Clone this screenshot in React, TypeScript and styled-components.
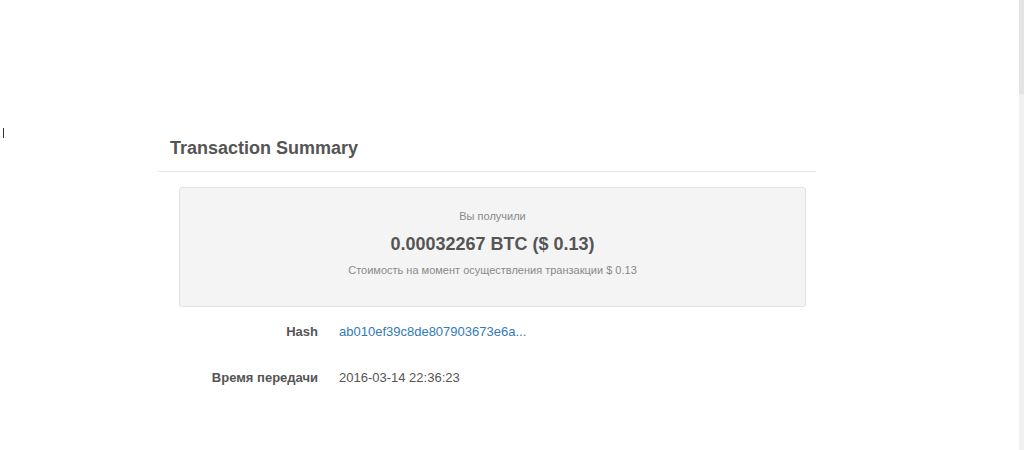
import React from 'react';
import styled, { createGlobalStyle } from 'styled-components';

const GlobalStyle = createGlobalStyle`
    html, body {
        margin: 0;
        padding: 0;
        background: #fff;
        font-family: "Liberation Sans", Arial, sans-serif;
    }
`;

const Page = styled.div`
    position: relative;
    width: 1024px;
    height: 450px;
    overflow: hidden;
    background: #fff;
`;

const Caret = styled.div`
    position: absolute;
    left: 3px;
    top: 128px;
    width: 1px;
    height: 10px;
    background: #333;
`;

const ScrollTrack = styled.div`
    position: absolute;
    right: 0;
    top: 0;
    width: 5px;
    height: 100%;
    background: #f1f1f1;
`;

const ScrollThumb = styled.div`
    height: 94px;
    background: #e4e4e4;
`;

const Panel = styled.section`
    width: 658px;
    margin-left: 158px;
    padding-top: 137px;
`;

const Header = styled.div`
    padding: 0 12px 12px;
    border-bottom: 1px solid #e8e8e8;
`;

const Title = styled.h3`
    margin: 0;
    font-size: 18px;
    line-height: 22px;
    font-weight: 700;
    color: #555;
`;

const Summary = styled.div`
    margin: 15px 10px 0 21px;
    height: 120px;
    box-sizing: border-box;
    background: #f4f4f4;
    border: 1px solid #e2e2e2;
    border-radius: 3px;
    display: flex;
    flex-direction: column;
    align-items: center;
    padding-top: 21px;
`;

const Caption = styled.div`
    font-size: 11px;
    line-height: 14px;
    color: #8a8a8a;
`;

const Amount = styled.div`
    margin: 10px 0 8px;
    font-size: 18px;
    line-height: 22px;
    font-weight: 700;
    color: #555;
`;

const Rows = styled.div`
    margin: 17px 0 0 21px;
    display: grid;
    grid-template-columns: 139px 1fr;
    column-gap: 21px;
    row-gap: 30px;
    font-size: 13px;
    line-height: 16px;
`;

const Label = styled.div`
    text-align: right;
    font-weight: 700;
    color: #555;
`;

const Value = styled.div<{ $link?: boolean }>`
    color: ${p => (p.$link ? '#337ab7' : '#555')};
`;

export default function App() {
    return (
        <Page>
            <GlobalStyle />
            <Caret />
            <ScrollTrack>
                <ScrollThumb />
            </ScrollTrack>
            <Panel>
                <Header>
                    <Title>Transaction Summary</Title>
                </Header>
                <Summary>
                    <Caption>Вы получили</Caption>
                    <Amount>0.00032267 BTC ($ 0.13)</Amount>
                    <Caption>Стоимость на момент осуществления транзакции $ 0.13</Caption>
                </Summary>
                <Rows>
                    <Label>Hash</Label>
                    <Value $link>ab010ef39c8de807903673e6a...</Value>
                    <Label>Время передачи</Label>
                    <Value>2016-03-14 22:36:23</Value>
                </Rows>
            </Panel>
        </Page>
    );
}
